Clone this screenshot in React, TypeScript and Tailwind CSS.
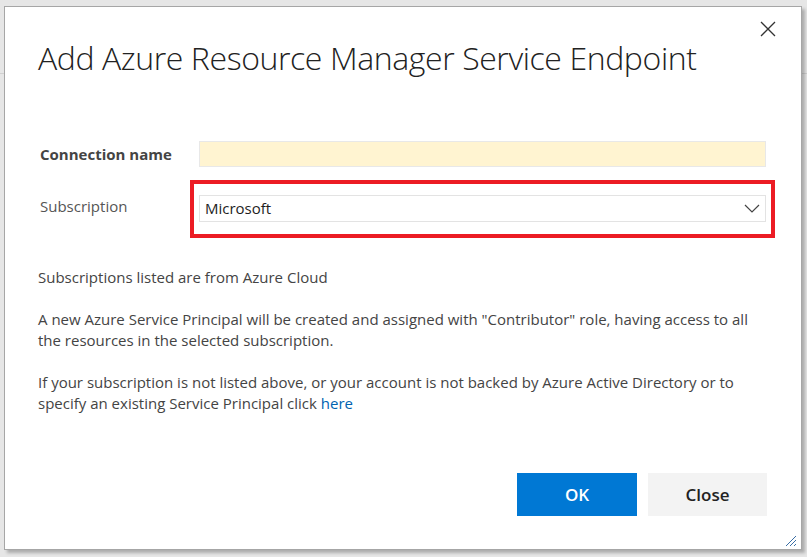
import React from "react";

export default function App() {
  const font = { fontFamily: '"Open Sans", "Noto Sans", "Liberation Sans", sans-serif' };
  return (
    <div className="relative w-[807px] h-[557px] bg-[#e6e6e6] overflow-hidden" style={font}>
      <div className="absolute left-0 top-[73px] w-full h-px bg-[#d0d0d0]" />
      <div className="absolute left-[4px] top-[6px] w-[798px] h-[544px] bg-white border border-[#a6a6a6] shadow-[3px_3px_3px_rgba(0,0,0,0.25)] flex flex-col">
        <div className="flex items-start justify-between pl-[33px] pr-[24px]">
          <h1 className="mt-[29px] text-[32px] font-light leading-[44px] text-[#222] tracking-[-0.4px]">
            Add Azure Resource Manager Service Endpoint
          </h1>
          <button className="mt-[13px] w-[18px] h-[18px] flex items-center justify-center text-[#333]">
            <svg width="16" height="16" viewBox="0 0 16 16" fill="none" stroke="#333" strokeWidth="1.3">
              <path d="M1 1L15 15M15 1L1 15" />
            </svg>
          </button>
        </div>

        <div className="mt-[61px] pl-[35px] pr-[35px] flex flex-col">
          <div className="flex items-center h-[26px]">
            <div className="w-[159px] text-[15px] font-bold text-[#444]">Connection name</div>
            <div className="flex-1 h-[26px] bg-[#fff4d1] border border-[#e8e8e8]" />
          </div>
          <div className="flex items-center mt-[13px]">
            <div className="w-[150px] text-[15px] text-[#555] -mt-[6px]">Subscription</div>
            <div className="flex-1 border-[4px] border-[#ec1c24] px-[5px] pt-[11px] pb-[12px] -mr-[9px]">
              <div className="h-[27px] border border-[#e3e3e3] flex items-center justify-between pl-[5px] pr-[5px]">
                <span className="text-[15px] text-[#1e1e1e]">Microsoft</span>
                <svg width="16" height="9" viewBox="0 0 16 9" fill="none" stroke="#444" strokeWidth="1.2">
                  <path d="M1 1L8 8L15 1" />
                </svg>
              </div>
            </div>
          </div>
        </div>

        <div className="mt-[29px] pl-[33px] pr-[30px] text-[15px] leading-[21px] text-[#444] flex flex-col gap-[21px]">
          <p>Subscriptions listed are from Azure Cloud</p>
          <p>
            A new Azure Service Principal will be created and assigned with "Contributor" role, having access to all
            <br />
            the resources in the selected subscription.
          </p>
          <p>
            If your subscription is not listed above, or your account is not backed by Azure Active Directory or to
            <br />
            specify an existing Service Principal click <span className="text-[#0063b1]">here</span>
          </p>
        </div>

        <div className="mt-auto mb-[33px] flex justify-end gap-[11px] pr-[34px]">
          <button className="w-[120px] h-[43px] bg-[#0078d4] text-white text-[17px] font-semibold">OK</button>
          <button className="w-[119px] h-[43px] bg-[#f3f3f3] text-[#222] text-[17px] font-semibold">Close</button>
        </div>

        <svg className="absolute right-[4px] bottom-[2px]" width="12" height="12" viewBox="0 0 12 12" fill="none" stroke="#3a6ea5" strokeWidth="1">
          <path d="M11 1L1 11M11 5L5 11M11 9L9 11" />
        </svg>
      </div>
    </div>
  );
}
